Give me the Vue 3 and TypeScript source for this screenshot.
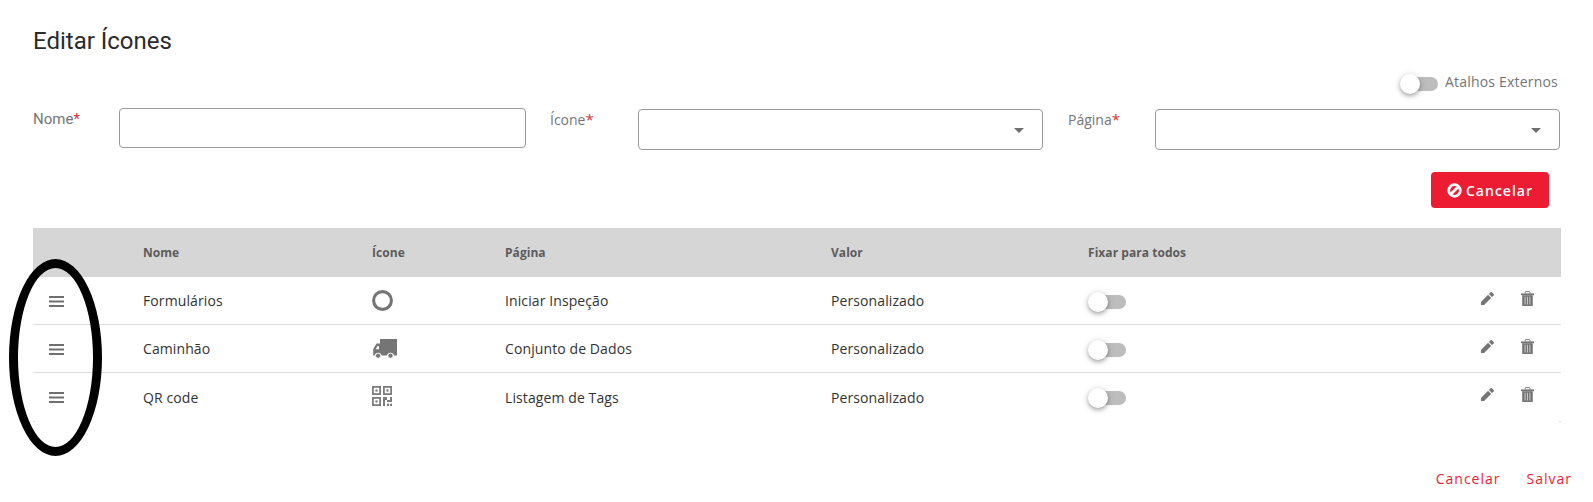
<script setup lang="ts">
interface Row {
  nome: string
  icone: 'circle' | 'truck' | 'qr'
  pagina: string
  valor: string
}

const rows: Row[] = [
  { nome: 'Formulários', icone: 'circle', pagina: 'Iniciar Inspeção', valor: 'Personalizado' },
  { nome: 'Caminhão', icone: 'truck', pagina: 'Conjunto de Dados', valor: 'Personalizado' },
  { nome: 'QR code', icone: 'qr', pagina: 'Listagem de Tags', valor: 'Personalizado' },
]
</script>

<template>
  <div class="page">
    <h1 class="title">Editar Ícones</h1>

    <div class="external">
      <span class="toggle"><span class="track"></span><span class="knob"></span></span>
      <span class="external-label">Atalhos Externos</span>
    </div>

    <div class="form">
      <label class="label label-nome">Nome<em>*</em></label>
      <div class="box box-input"></div>
      <label class="label label-icone">Ícone<em>*</em></label>
      <div class="box box-select"><i class="caret"></i></div>
      <label class="label label-pagina">Página<em>*</em></label>
      <div class="box box-select"><i class="caret"></i></div>
    </div>

    <div class="form-actions">
      <button class="btn-cancel" type="button">
        <svg class="ban" viewBox="0 0 16 16" width="15" height="15">
          <circle cx="8" cy="8" r="6.2" fill="none" stroke="#fff" stroke-width="3" />
          <path d="M3.8 12.2 12.2 3.8" stroke="#fff" stroke-width="3" />
        </svg>
        <span>Cancelar</span>
      </button>
    </div>

    <div class="table">
      <div class="grid head">
        <span></span>
        <span>Nome</span>
        <span>Ícone</span>
        <span>Página</span>
        <span>Valor</span>
        <span>Fixar para todos</span>
        <span></span>
      </div>
      <div v-for="row in rows" :key="row.nome" class="grid row">
        <span class="drag">
          <svg viewBox="0 0 15 11" width="15" height="11" fill="#6f6f6f">
            <rect y="0" width="15" height="2" />
            <rect y="4.5" width="15" height="2" />
            <rect y="9" width="15" height="2" />
          </svg>
        </span>
        <span>{{ row.nome }}</span>
        <span class="icon-cell">
          <svg v-if="row.icone === 'circle'" viewBox="0 0 21 21" width="21" height="21">
            <circle cx="10.5" cy="10.5" r="8.9" fill="none" stroke="#757575" stroke-width="3.1" />
          </svg>
          <svg v-else-if="row.icone === 'truck'" class="truck" viewBox="0 0 24 20" width="24" height="20" fill="#757575">
            <path d="M7 0H24v16.5H21a3.6 3.6 0 0 0-7 0H8.6a3.6 3.6 0 0 0-7 0H.2V10L3.6 4.6H7z" />
            <path d="M2.7 10.2 4.6 7H6v3.2z" fill="#fff" />
            <circle cx="5.1" cy="16.7" r="2.5" fill="#757575" stroke="#fff" stroke-width=".7" />
            <circle cx="17.5" cy="16.7" r="2.5" fill="#757575" stroke="#fff" stroke-width=".7" />
          </svg>
          <svg v-else class="qr" viewBox="0 0 20 20" width="20" height="20">
            <g fill="none" stroke="#7d7d7d" stroke-width="1.8">
              <rect x=".9" y=".9" width="7.2" height="7.2" />
              <rect x="11.9" y=".9" width="7.2" height="7.2" />
              <rect x=".9" y="11.9" width="7.2" height="7.2" />
            </g>
            <g fill="#7d7d7d">
              <rect x="3.4" y="3.4" width="2.2" height="2.2" />
              <rect x="14.4" y="3.4" width="2.2" height="2.2" />
              <rect x="3.4" y="14.4" width="2.2" height="2.2" />
              <path d="M11 11h4v3h3v-3h2v5h-5v-2h-2v6h-2z" />
              <rect x="15" y="17.6" width="2" height="2.4" />
              <rect x="18" y="17.6" width="2" height="2.4" />
            </g>
          </svg>
        </span>
        <span>{{ row.pagina }}</span>
        <span>{{ row.valor }}</span>
        <span class="toggle-cell">
          <span class="toggle"><span class="track"></span><span class="knob"></span></span>
        </span>
        <span class="actions">
          <svg viewBox="0 0 16 16" width="15" height="15" fill="#757575">
            <path d="M1 11.7V15h3.3l7.6-7.6-3.3-3.3L1 11.7z" />
            <path d="m9.5 3.2 3.3 3.3 1.8-1.8c.4-.4.4-1 0-1.4l-1.9-1.9c-.4-.4-1-.4-1.4 0L9.5 3.2z" />
          </svg>
          <svg viewBox="0 0 13 15" width="13" height="15">
            <path d="M4 2.4V1.6C4 .9 4.6.5 5.2.5h2.6C8.4.5 9 .9 9 1.6v.8" fill="none" stroke="#757575" stroke-width="1" />
            <rect x="0" y="2.4" width="13" height="1.8" fill="#757575" />
            <path d="M1.2 4.2h10.6V14c0 .6-.4 1-1 1H2.2c-.6 0-1-.4-1-1z" fill="#757575" />
            <path d="M3.6 5.8h1v7.6h-1zM6 5.8h1v7.6H6zM8.4 5.8h1v7.6h-1z" fill="#c8c8c8" />
          </svg>
        </span>
      </div>
    </div>

    <div class="footer">
      <a class="link">Cancelar</a>
      <a class="link">Salvar</a>
    </div>

    <div class="annotation"></div>
  </div>
</template>

<style scoped>
.page {
  position: relative;
  width: 1593px;
  height: 502px;
  overflow: hidden;
  box-sizing: border-box;
  padding: 26px 32px 0 33px;
  background: #fff;
  font-family: "Open Sans", sans-serif;
  color: #333;
}
.title {
  margin: 0;
  font: 400 24px/30px Roboto, sans-serif;
  color: #2b2b2b;
}
.external {
  display: flex;
  justify-content: flex-end;
  align-items: center;
  gap: 7px;
  margin-top: 17px;
  height: 20px;
  padding-right: 3px;
}
.external-label {
  font-size: 14px;
  letter-spacing: 0.2px;
  color: #757575;
  margin-bottom: 3px;
}
.toggle {
  position: relative;
  display: block;
  width: 38px;
  height: 20px;
}
.external .toggle {
  top: 1px;
}
.track {
  position: absolute;
  left: 2px;
  top: 3px;
  width: 36px;
  height: 14px;
  border-radius: 7px;
  background: #bdbdbd;
}
.knob {
  position: absolute;
  left: 0;
  top: 0;
  width: 20px;
  height: 20px;
  border-radius: 50%;
  background: #fff;
  box-shadow: 0 2px 4px rgba(0, 0, 0, 0.3), 0 1px 8px rgba(0, 0, 0, 0.12);
}
.form {
  display: grid;
  grid-template-columns: 86px 407px 112px 405px 112px 405px;
  margin-top: 15px;
  height: 41px;
  align-items: start;
}
.label {
  font-size: 14px;
  line-height: 20px;
  color: #757575;
  padding-top: 1px;
}
.label-nome {
  font-family: Roboto, sans-serif;
  font-size: 15px;
}
.label-icone {
  padding-left: 24px;
}
.label-pagina {
  padding-left: 25px;
}
.label em {
  font-style: normal;
  font-size: 15px;
  color: #d32f3f;
}
.box {
  position: relative;
  box-sizing: border-box;
  height: 40px;
  border: 1px solid #9a9a9a;
  border-radius: 4px;
  background: #fff;
}
.box-select {
  height: 41px;
  margin-top: 1px;
}
.caret {
  position: absolute;
  right: 18px;
  top: 18px;
  width: 0;
  height: 0;
  border-left: 5px solid transparent;
  border-right: 5px solid transparent;
  border-top: 5px solid #6f6f6f;
}
.form-actions {
  display: flex;
  justify-content: flex-end;
  margin-top: 23px;
  padding-right: 12px;
}
.btn-cancel {
  display: flex;
  align-items: center;
  justify-content: center;
  gap: 4px;
  width: 118px;
  height: 36px;
  padding: 0;
  border: 0;
  border-radius: 4px;
  background: #ed1c33;
  color: #fff;
  font: 600 14px "Open Sans", sans-serif;
  letter-spacing: 1px;
}
.table {
  position: relative;
  margin-top: 20px;
  font-size: 14px;
  letter-spacing: 0.1px;
  color: #333;
}
.table::before,
.table::after {
  content: "";
  position: absolute;
  bottom: -1px;
  width: 2px;
  height: 1px;
  background: #dcdcdc;
}
.table::before {
  left: 0;
}
.table::after {
  right: 0;
}
.grid {
  display: grid;
  grid-template-columns: 110px 229px 133px 326px 257px 1fr 120px;
  align-items: center;
}
.head {
  height: 48px;
  background: #d6d6d6;
  font-size: 12px;
  font-weight: 700;
  letter-spacing: 0.05px;
  color: #5c5c5c;
  border-bottom: 1px solid #d6d6d6;
}
.row {
  box-sizing: border-box;
  height: 48px;
  border-bottom: 1px solid #dcdcdc;
}
.row:last-child {
  border-bottom: 0;
}
.drag {
  display: flex;
  padding-left: 16px;
  padding-top: 1px;
}
.drag svg,
.icon-cell svg {
  display: block;
}
.icon-cell {
  display: flex;
  align-items: center;
}
.truck {
  margin-left: 1px;
}
.qr {
  margin-bottom: 2px;
}
.toggle-cell {
  padding-top: 2px;
}
.actions {
  display: flex;
  align-items: center;
  gap: 26px;
  margin-top: -5px;
  padding-left: 39px;
}
.footer {
  position: absolute;
  right: 21px;
  bottom: 13px;
  display: flex;
  gap: 26px;
}
.link {
  font-size: 14px;
  line-height: 20px;
  letter-spacing: 1px;
  color: #ed1c33;
}
.annotation {
  position: absolute;
  left: 9px;
  top: 259px;
  width: 93px;
  height: 197px;
  box-sizing: border-box;
  border: 9px solid #000;
  border-radius: 50%;
}
</style>
